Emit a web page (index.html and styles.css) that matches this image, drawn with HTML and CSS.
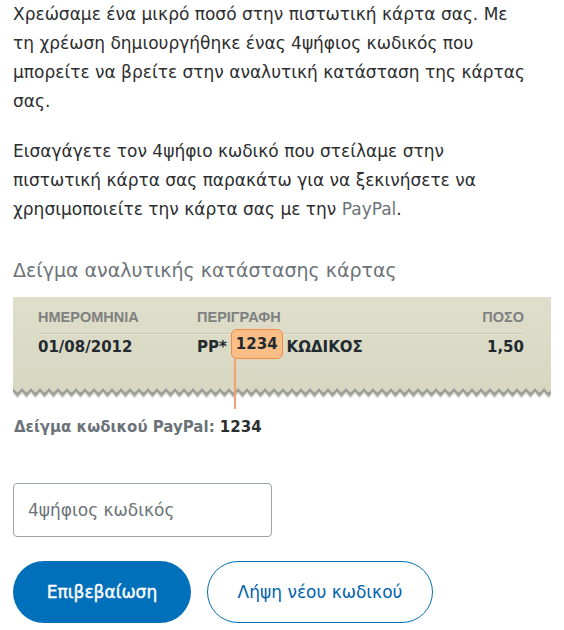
FILE: index.html
```html
<!DOCTYPE html>
<html lang="el">
<head>
    <meta charset="UTF-8">
    <meta name="viewport" content="width=device-width, initial-scale=1.0">
    <title>Επιβεβαίωση κάρτας</title>
    <link rel="stylesheet" href="styles.css">
</head>
<body>
    <div class="page">
        <p class="intro">Χρεώσαμε ένα μικρό ποσό στην πιστωτική κάρτα σας. Με τη χρέωση δημιουργήθηκε ένας 4ψήφιος κωδικός που μπορείτε να βρείτε στην αναλυτική κατάσταση της κάρτας σας.</p>
        <p class="intro">Εισαγάγετε τον 4ψήφιο κωδικό που στείλαμε στην πιστωτική κάρτα σας παρακάτω για να ξεκινήσετε να χρησιμοποιείτε την κάρτα σας με την <span class="brand">PayPal</span>.</p>

        <h2 class="sample-title">Δείγμα αναλυτικής κατάστασης κάρτας</h2>

        <div class="statement">
            <div class="statement-body">
                <div class="row head">
                    <span>ΗΜΕΡΟΜΗΝΙΑ</span>
                    <span>ΠΕΡΙΓΡΑΦΗ</span>
                    <span class="amount">ΠΟΣΟ</span>
                </div>
                <div class="row data">
                    <span>01/08/2012</span>
                    <span class="desc">PP* <span class="code">1234</span> ΚΩΔΙΚΟΣ</span>
                    <span class="amount">1,50</span>
                </div>
            </div>
            <!-- torn paper edge -->
            <svg class="edge" width="100%" height="16" xmlns="http://www.w3.org/2000/svg">
                <defs>
                    <pattern id="zig" width="9" height="16" patternUnits="userSpaceOnUse">
                        <path d="M0 0 H9 V5 Q6.75 8 4.5 10 Q2.25 8 0 5 Z" fill="#74746f" transform="translate(0 2.5)" opacity="0.85"/>
                        <path d="M0 0 H9 V5 Q6.75 8 4.5 10 Q2.25 8 0 5 Z" fill="#b3b3ae" transform="translate(0 4.5)" opacity="0.5"/>
                        <path d="M0 0 H9 V4 Q6.75 7 4.5 8.5 Q2.25 7 0 4 Z" fill="#d8d7c2"/>
                    </pattern>
                </defs>
                <rect width="100%" height="16" fill="url(#zig)"/>
            </svg>
        </div>

        <p class="sample-code">Δείγμα κωδικού PayPal: <b>1234</b></p>

        <form class="verify">
            <input type="text" class="code-input" placeholder="4ψήφιος κωδικός">
            <div class="actions">
                <button type="submit" class="btn primary">Επιβεβαίωση</button>
                <button type="button" class="btn secondary">Λήψη νέου κωδικού</button>
            </div>
        </form>
    </div>
</body>
</html>
```

FILE: styles.css
```css
body {
    margin: 0;
    background: #fff;
    font-family: "DejaVu Sans", Verdana, sans-serif;
    color: #2c2e2f;
}

.page {
    padding: 0 13px;
    width: 515px;
}

.intro {
    font-size: 17px;
    line-height: 29px;
    margin: 0 0 21px;
}

.brand {
    color: #6c7378;
}

.sample-title {
    font-size: 19px;
    font-weight: normal;
    line-height: 29px;
    color: #6c7378;
    margin: 32px 0 12px;
}

/* Statement sample */
.statement {
    width: 538px;
}

.statement-body {
    background: #dcdbc7;
    background-image: linear-gradient(180deg, #dfdeca 0%, #d8d7c2 100%);
    padding: 12px 27px 26px 25px;
}

.row {
    display: grid;
    grid-template-columns: 159px 1fr auto;
    align-items: center;
}

.row.head {
    font-family: "Liberation Sans", Arial, sans-serif;
    font-size: 14.5px;
    font-weight: bold;
    line-height: 17px;
    color: #7e8182;
    padding-bottom: 7px;
    border-bottom: 1px solid #cdcbb6;
    box-shadow: 0 1px 0 #e5e4d3;
}

.row.data {
    font-size: 15px;
    font-weight: bold;
    line-height: 18px;
    color: #222a30;
}

.amount {
    text-align: right;
}

.desc {
    display: flex;
    align-items: center;
    gap: 4px;
}

.code {
    position: relative;
    z-index: 1;
    display: inline-block;
    background: #fbbe87;
    border: 1px solid #ef8b45;
    border-radius: 6px;
    padding: 5px 4px;
    margin-top: -5px;
}

/* connector down to the caption */
.code::after {
    content: "";
    position: absolute;
    left: 2px;
    top: 100%;
    width: 2px;
    height: 51px;
    background: #f4a172;
}

.edge {
    display: block;
    margin-top: -1px;
}

.sample-code {
    font-size: 15px;
    font-weight: bold;
    line-height: 18px;
    color: #6c7378;
    margin: 18px 0 0 1px;
}

.sample-code b {
    color: #2c2e2f;
}

/* Form */
.verify {
    margin-top: 47px;
}

.code-input {
    display: block;
    box-sizing: border-box;
    width: 259px;
    height: 54px;
    padding: 0 14px;
    border: 1px solid #9da3a6;
    border-radius: 4px;
    font-family: "DejaVu Sans", Verdana, sans-serif;
    font-size: 17px;
    color: #2c2e2f;
}

.code-input::placeholder {
    color: #6c7378;
}

.actions {
    display: flex;
    gap: 16px;
    margin-top: 24px;
}

.btn {
    height: 62px;
    border-radius: 31px;
    font-family: "DejaVu Sans", Verdana, sans-serif;
    font-size: 17px;
    cursor: pointer;
}

.btn.primary {
    width: 178px;
    background: #0070ba;
    border: none;
    color: #fff;
    -webkit-text-stroke: 0.4px #fff;
}

.btn.secondary {
    width: 226px;
    background: #fff;
    border: 1px solid #0070ba;
    color: #0062ad;
}
```
